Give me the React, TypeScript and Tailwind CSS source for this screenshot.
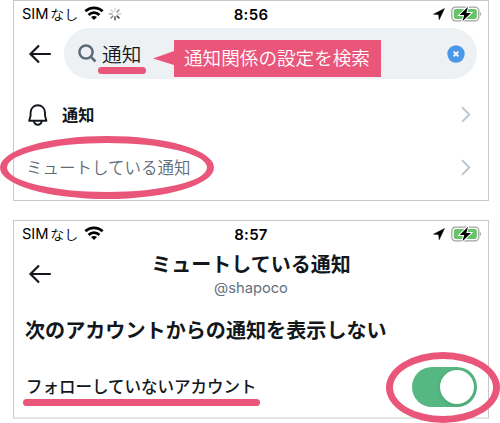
import React from "react";

const sans = "font-['Inter','Noto_Sans_CJK_JP',sans-serif]";
const jp = "font-['Noto_Sans_CJK_JP',sans-serif]";

function Wifi() {
  return (
    <svg width="20" height="14" viewBox="0 0 20 14" className="ml-[6px] -mt-px shrink-0">
      <g fill="none" stroke="#000" strokeWidth="2.800">
        <path d="M1.400 5.300C6 .7 14 .7 18.600 5.300" />
        <path d="M4.600 8.900C7.600 5.900 12.400 5.900 15.400 8.900" />
      </g>
      <path d="M10 13.900 7 11C8.600 9.500 11.400 9.500 13 11Z" fill="#000" />
    </svg>
  );
}

function Spinner() {
  return (
    <svg width="14" height="14" viewBox="-7 -7 14 14" className="ml-[4px] shrink-0" strokeWidth="1.300" strokeLinecap="round">
      <path d="M0-2.800V-5.800" stroke="#ddd" />
      <path d="M2-2 4-4" stroke="#888" />
      <path d="M2.800 0H5.800" stroke="#ccc" />
      <path d="M2 2 4 4" stroke="#222" />
      <path d="M0 2.800V5.800" stroke="#333" />
      <path d="M-2 2-4 4" stroke="#777" />
      <path d="M-2.800 0H-5.800" stroke="#aaa" />
      <path d="M-2-2-4-4" stroke="#ccc" />
    </svg>
  );
}

function StatusBar({ time, loading }: { time: string; loading?: boolean }) {
  return (
    <div className="grid h-[26px] grid-cols-[1fr_auto_1fr] items-center text-black">
      <div className="flex items-center pl-[8px] leading-none">
        <span className={`${sans} text-[14.700px] tracking-[-0.1px]`}>SIM</span>
        <span className={`${jp} ml-[2px] text-[14px] font-[350]`}>なし</span>
        <Wifi />
        {loading && <Spinner />}
      </div>
      <span className={`${sans} text-[15px] font-semibold leading-none tracking-[0.300px]`}>{time}</span>
      <div className="-mt-px flex items-center justify-end pr-[6px]">
        <svg width="12" height="12" viewBox="0 0 12 12" className="mr-[6px] mt-px">
          <path d="M11.500.5.500 6.200 5.600 6.600 6.200 11.700Z" fill="#000" stroke="#000" strokeWidth=".5" strokeLinejoin="round" />
        </svg>
        <svg width="31" height="16" viewBox="0 0 31 16">
          <rect x=".8" y="1.100" width="27" height="13.800" rx="3.800" fill="#fff" stroke="#a3a3a3" strokeWidth="1.300" />
          <rect x="2.800" y="3" width="23" height="10" rx="2" fill="#65c466" />
          <path d="M29.200 6v4c1.200-.5 1.200-3.500 0-4Z" fill="#999" />
          <path d="M17 .8 8.700 8.900h4.500L11.500 15.300l8.400-8.400h-4.600Z" fill="#000" stroke="#fff" strokeWidth="2" paintOrder="stroke" />
        </svg>
      </div>
    </div>
  );
}

function BackArrow() {
  return (
    <svg width="24" height="20" viewBox="0 0 24 20" fill="none" stroke="#14181c" strokeWidth="2.200">
      <path d="M22.800 10H2.500M11 1.500 2.500 10 11 18.500" />
    </svg>
  );
}

function Chevron() {
  return (
    <svg width="10" height="17" viewBox="0 0 10 17" fill="none" stroke="#bac5ce" strokeWidth="1.900">
      <path d="M1 1.200 8.300 8.500 1 15.800" />
    </svg>
  );
}

function Oval({ className }: { className: string }) {
  return <div className={`pointer-events-none absolute rounded-[50%] border-[7px] border-[#ea557a] ${className}`} />;
}

export default function App() {
  return (
    <main className="relative h-[423px] w-[500px] overflow-hidden bg-white pl-[13px] text-[#12171b]">
      <section className="h-[201px] w-[476px] border border-[#c8c8c8] bg-white">
        <StatusBar time="8:56" loading />
        <div className="mt-px flex h-[51px] items-center">
          <div className="w-[50px] pl-[14px]">
            <BackArrow />
          </div>
          <div className="flex h-[51px] w-[413px] items-center rounded-full bg-[#edf1f3] pl-[14px] pr-[12px]">
            <svg width="19" height="19" viewBox="0 0 19 19" fill="none" stroke="#5c6b7a" strokeWidth="2.500">
              <circle cx="8" cy="8" r="6.600" />
              <path d="m12.700 12.700 4.800 4.800" />
            </svg>
            <span className="relative ml-[5px]">
              <span className={`${jp} block text-[19.700px] font-[350] leading-[30px]`}>通知</span>
              <span className="absolute left-[-4px] top-[28px] h-[7px] w-[48px] rounded-full bg-[#ea557a]" />
            </span>
            <svg width="18" height="18" viewBox="0 0 18 18" className="ml-auto">
              <circle cx="9" cy="9" r="8.700" fill="#4a99e9" />
              <path d="m6.600 6.600 4.800 4.800m0-4.800-4.800 4.800" stroke="#fff" strokeWidth="1.700" />
            </svg>
          </div>
        </div>
        <div className="mt-[9px] flex h-[53px] items-center pl-[14px] pr-[17px]">
          <svg width="20" height="22" viewBox="0 0 20 22" fill="none" stroke="#12171b" strokeWidth="1.900">
            <path d="M1.200 16.700 2.600 11.500V8.300C3 4 6 1.300 9.800 1.300S16.600 4 17 8.300v3.200l1.400 5.200Z" strokeLinejoin="round" />
            <path d="M5.800 17c.5 2.400 2 3.700 4 3.700s3.500-1.300 4-3.700" />
          </svg>
          <span className={`${jp} ml-[14px] text-[16.200px] font-bold`}>通知</span>
          <span className="ml-auto"><Chevron /></span>
        </div>
        <div className="flex h-[52px] items-center justify-between pl-[12px] pr-[17px]">
          <span className={`${jp} text-[16.500px] font-[350] text-[#5f6b77]`}>ミュートしている通知</span>
          <Chevron />
        </div>
      </section>

      <section className="mt-[19px] h-[199px] w-[476px] border border-b-2 border-[#c8c8c8] border-b-[#e4e4e4] bg-white">
        <StatusBar time="8:57" />
        <header className="grid h-[53px] grid-cols-[1fr_auto_1fr] items-center">
          <div className="pl-[14px]">
            <BackArrow />
          </div>
          <div className="pt-[3px] text-center">
            <h1 className={`${jp} text-[20px] font-bold leading-[26px]`}>ミュートしている通知</h1>
            <p className={`${sans} text-[14.700px] leading-[22px] text-[#65717d]`}>@shapoco</p>
          </div>
        </header>
        <h2 className={`${jp} mt-[15px] pl-[11px] text-[20.100px] font-bold leading-[30px]`}>次のアカウントからの通知を表示しない</h2>
        <div className="mt-[19px] flex h-[46px] items-center justify-between pl-[12px] pr-[11px]">
          <span className={`${jp} -mt-[2px] text-[16.500px] font-medium`}>フォローしていないアカウント</span>
          <span className="flex h-[40px] w-[65px] items-center justify-end rounded-full bg-[#55b781] pr-[3px]">
            <span className="h-[34px] w-[34px] rounded-full bg-white shadow-[0_1px_4px_#0002]" />
          </span>
        </div>
      </section>

      <div className="absolute left-[174px] top-[40px] flex h-[37px] w-[207px] items-center bg-[#ea557a]">
        <svg width="21" height="14" viewBox="0 0 21 14" className="absolute left-[-21px] top-[11px]">
          <path d="M21 0 0 7.500 21 14Z" fill="#ea557a" />
        </svg>
        <span className={`${jp} -mt-[2px] pl-[10px] text-[18.600px] font-[350] leading-none text-white whitespace-nowrap`}>通知関係の設定を検索</span>
      </div>
      <Oval className="left-0 top-[136px] h-[63px] w-[214px]" />
      <div className="absolute left-[23px] top-[399px] h-[7px] w-[237px] rounded-full bg-[#ea557a]" />
      <Oval className="left-[386px] top-[352px] h-[71px] w-[114px]" />
    </main>
  );
}
